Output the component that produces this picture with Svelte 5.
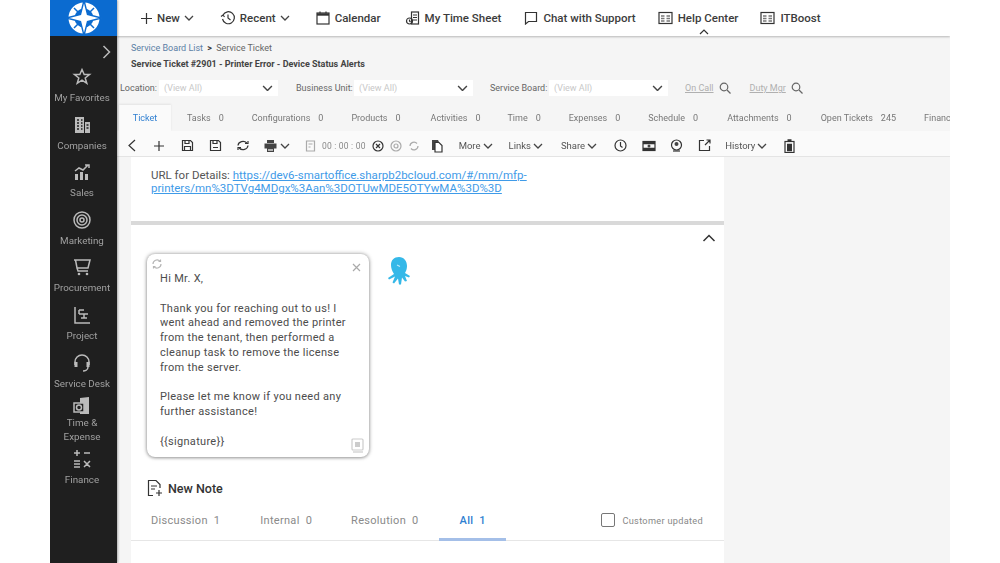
<script lang="ts">
    const sideItems = [
        { id: "fav", label: ["My Favorites"] },
        { id: "companies", label: ["Companies"] },
        { id: "sales", label: ["Sales"] },
        { id: "marketing", label: ["Marketing"] },
        { id: "procurement", label: ["Procurement"] },
        { id: "project", label: ["Project"] },
        { id: "desk", label: ["Service Desk"] },
        { id: "time", label: ["Time &", "Expense"] },
        { id: "finance", label: ["Finance"] },
    ];

    const tabs = [
        ["Tasks", "0", 16],
        ["Configurations", "0", 28],
        ["Products", "0", 28],
        ["Activities", "0", 30],
        ["Time", "0", 27],
        ["Expenses", "0", 28],
        ["Schedule", "0", 28],
        ["Attachments", "0", 29],
        ["Open Tickets", "245", 29],
    ];

    const noteTabs = [
        ["Discussion", "1", 20],
        ["Internal", "0", 40],
        ["Resolution", "0", 39],
    ];
</script>

{#snippet chev(w = 10)}
    <svg class="chev" width={w} height={w * 0.6} viewBox="0 0 10 6"><path d="M1 1l4 4 4-4" /></svg>
{/snippet}

{#snippet sideIcon(id: string)}
    <svg width="20" height="20" viewBox="0 0 20 20" class="side-icon">
        {#if id === "fav"}
            <path d="M10 2.500l2.200 5h5.300l-4.300 3.400 1.600 5.400-4.800-3.100-4.800 3.100 1.600-5.400-4.300-3.400h5.300z" />
        {:else if id === "companies"}
            <path class="fill" d="M3 2h9v16H3zM13 7h5v11h-5z" />
            <path class="cut" d="M5 5h2M9 5h1.500M5 8h2M9 8h1.500M5 11h2M9 11h1.500M5 14h2M9 14h1.500M14.500 10h2M14.500 13h2" />
        {:else if id === "sales"}
            <path class="fill" d="M3 12h3v6H3zM8 10h3v8H8zM13 12h3v6h-3z" />
            <path d="M3 9l4-3 4 2 5-5M13 3h4v3" />
        {:else if id === "marketing"}
            <circle cx="10" cy="10" r="8" /><circle cx="10" cy="10" r="5" /><circle cx="10" cy="10" r="2" />
        {:else if id === "procurement"}
            <path d="M2 3h16l-2 8H5L3.500 3M5 11l1 3h10" />
            <circle class="fill" cx="7" cy="17" r="1.300" /><circle class="fill" cx="15" cy="17" r="1.300" />
        {:else if id === "project"}
            <path d="M3 2v16h15M7 5h5M7 9h9M9 13h6M7 5v4M12 9v4" />
        {:else if id === "desk"}
            <path d="M3 12V9a7 7 0 0 1 14 0v3" />
            <path class="fill" d="M2.500 9h3v5h-3zM14.500 9h3v5h-3z" />
            <path d="M16 14c0 3-3 4-5 4" />
        {:else if id === "time"}
            <path class="fill" d="M8 2l9-1v17H8z" />
            <rect class="dark" x="2" y="7" width="10" height="9" />
            <circle cx="7" cy="11.500" r="2.500" />
        {:else}
            <path d="M5 1v6M2 4h6M12 4h6M2 12h6M2 15h6M2 18h6M12 12l6 6M18 12l-6 6" />
        {/if}
    </svg>
{/snippet}

<div class="frame">
    <aside class="sidebar">
        <div class="logo">
            <svg width="36" height="36" viewBox="0 0 36 36">
                <circle cx="18" cy="18" r="12.500" fill="none" stroke="#fff" stroke-width="6" />
                <path d="M8 8l20 20M28 8L8 28" stroke="#0b6bd0" stroke-width="1.500" />
                <path d="M18 .5l3.500 14 14 3.500-14 3.500-3.500 14-3.500-14-14-3.500 14-3.500z" fill="#fff" stroke="#0b6bd0" stroke-width="1.400" />
            </svg>
        </div>
        <div class="side-toggle">
            <svg width="9" height="14" viewBox="0 0 9 14"><path d="M1.500 1l6 6-6 6" /></svg>
        </div>
        {#each sideItems as item}
            <div class="side-item {item.id}">
                {@render sideIcon(item.id)}
                {#each item.label as line}
                    <span>{line}</span>
                {/each}
            </div>
        {/each}
    </aside>

    <div class="main">
        <header class="topbar">
            <div class="nav-item new">
                <svg width="13" height="13" viewBox="0 0 13 13"><path d="M6.500 1v11M1 6.500h11" /></svg>
                New {@render chev()}
            </div>
            <div class="nav-item recent">
                <svg width="16" height="16" viewBox="0 0 16 16"><path d="M3 5a6 6 0 1 1-.5 4M1 6.500l2-1.500 1.500 2M8 4.500V8l2.500 2" /></svg>
                Recent {@render chev()}
            </div>
            <div class="nav-item calendar">
                <svg width="14" height="14" viewBox="0 0 14 14"><rect x="1" y="2" width="12" height="11" /><path class="thick" d="M1 3.500h12" /><path d="M4 .5v2M10 .5v2" /></svg>
                Calendar
            </div>
            <div class="nav-item sheet">
                <svg width="15" height="15" viewBox="0 0 15 15"><rect x="6.500" y="1" width="7" height="12" /><path d="M8 4h4M8 6.500h4M8 9h4" /><circle cx="4.500" cy="10" r="3" /><path d="M4.500 8.500V10l1 1" /></svg>
                My Time Sheet
            </div>
            <div class="nav-item chat">
                <svg width="14" height="14" viewBox="0 0 14 14"><path d="M1.500 1.500h11v9h-8l-3 2.500z" /></svg>
                Chat with Support
            </div>
            <div class="nav-item help">
                <svg width="15" height="14" viewBox="0 0 15 14"><rect x="1" y="1.500" width="13" height="11" /><path class="thick-soft" d="M3 5h3.500M3 7.500h3.500M3 10h3.500M8.500 5H12M8.500 7.500H12M8.500 10H12" /></svg>
                Help Center
            </div>
            <div class="nav-item boost">
                <svg width="15" height="14" viewBox="0 0 15 14"><rect x="1" y="1.500" width="13" height="11" /><path class="thick-soft" d="M3 5h3.500M3 7.500h3.500M3 10h3.500M8.500 5H12M8.500 7.500H12M8.500 10H12" /></svg>
                ITBoost
            </div>
            <svg class="collapse" width="10" height="6" viewBox="0 0 10 6"><path d="M1 5l4-4 4 4" /></svg>
        </header>

        <div class="page-head">
            <div class="crumbs"><span class="crumb-link">Service Board List</span> <b>&gt;</b> Service Ticket</div>
            <div class="ticket-title">Service Ticket #2901 - Printer Error - Device Status Alerts</div>
        </div>

        <div class="filters">
            <span class="f-label first">Location:</span>
            <div class="select"><span>(View All)</span>{@render chev(11)}</div>
            <span class="f-label unit">Business Unit:</span>
            <div class="select"><span>(View All)</span>{@render chev(11)}</div>
            <span class="f-label board">Service Board:</span>
            <div class="select"><span>(View All)</span>{@render chev(11)}</div>
            <span class="f-link oncall">On Call</span>
            <svg class="search" width="12" height="12" viewBox="0 0 12 12"><circle cx="5" cy="5" r="3.800" /><path d="M8 8l3.500 3.500" /></svg>
            <span class="f-link duty">Duty Mgr</span>
            <svg class="search" width="12" height="12" viewBox="0 0 12 12"><circle cx="5" cy="5" r="3.800" /><path d="M8 8l3.500 3.500" /></svg>
        </div>

        <nav class="tabs">
            <div class="tab active">Ticket</div>
            {#each tabs as [name, count, gap]}
                <div class="tab" style="margin-left: {gap}px">{name}<i>{count}</i></div>
            {/each}
            <div class="tab finance">Finance</div>
        </nav>

        <div class="toolbar">
            <svg class="t" style="margin-left:10px" width="10" height="13" viewBox="0 0 10 13"><path d="M8 1L2 6.500 8 12" /></svg>
            <svg class="t" style="margin-left:16px" width="12" height="12" viewBox="0 0 12 12"><path d="M6 1v10M1 6h10" /></svg>
            <svg class="t" style="margin-left:16px" width="13" height="13" viewBox="0 0 13 13"><path d="M1.500 1.500h8l2 2v8h-10z" /><path d="M4 1.500v3h4v-3M3.500 11.500v-4h6v4" /></svg>
            <svg class="t" style="margin-left:15px" width="13" height="13" viewBox="0 0 13 13"><path d="M1.500 1.500h8l2 2v8h-10z" /><path d="M4 1.500v3h4v-3M4 8.500h5" /></svg>
            <svg class="t" style="margin-left:14px" width="14" height="13" viewBox="0 0 14 13"><path d="M2 6.500a5 4.500 0 0 1 8.800-2.500M12 6.500a5 4.500 0 0 1-8.800 2.500M9 4.500h3V2M5 8.500H2V11" /></svg>
            <svg class="t" style="margin-left:13px" width="15" height="14" viewBox="0 0 15 14"><path class="fill" d="M4 1h7v3H4zM1.500 4.500h12v5h-12zM4 9h7v4H4z" /><path class="cut" d="M5 11h5" /></svg>
            <span class="t-chev">{@render chev()}</span>
            <svg class="t faint" style="margin-left:15px" width="11" height="12" viewBox="0 0 11 12"><path d="M1.500 1h8v10h-8zM3.500 4h4M3.500 7h2" /></svg>
            <span class="timer">00 : 00 : 00</span>
            <svg class="t" style="margin-left:6px" width="12" height="12" viewBox="0 0 12 12"><circle cx="6" cy="6" r="5" /><path d="M4 4l4 4M8 4l-4 4" /></svg>
            <svg class="t faint" style="margin-left:6px" width="12" height="12" viewBox="0 0 12 12"><circle cx="6" cy="6" r="5" /><circle cx="6" cy="6" r="2" /></svg>
            <svg class="t faint" style="margin-left:6px" width="12" height="12" viewBox="0 0 12 12"><path d="M2 6a4 4 0 0 1 7-2.500M10 6a4 4 0 0 1-7 2.500" /></svg>
            <svg class="t" style="margin-left:11px" width="12" height="14" viewBox="0 0 12 14"><path class="fill" d="M1 1h6l1 2v8H1z" /><path d="M4 3.500h4l3 3v6.500H4z" fill="#fff" /></svg>
            <span class="t-label" style="margin-left:16px">More</span>{@render chev()}
            <span class="t-label" style="margin-left:16px">Links</span>{@render chev()}
            <span class="t-label" style="margin-left:18px">Share</span>{@render chev()}
            <svg class="t" style="margin-left:17px" width="13" height="13" viewBox="0 0 13 13"><circle cx="6.500" cy="6.500" r="5.500" /><path d="M6.500 3v4l2 1.500" /></svg>
            <svg class="t" style="margin-left:15px" width="14" height="12" viewBox="0 0 14 12"><rect x="1" y="1.500" width="12" height="9" /><path class="thick" d="M1 3h12M1 9h12" /><circle class="fill" cx="7" cy="6" r="1.500" /></svg>
            <svg class="t" style="margin-left:14px" width="13" height="13" viewBox="0 0 13 13"><circle cx="6.500" cy="6" r="5" /><circle class="fill" cx="6.500" cy="5" r="2" /><path d="M3 12h7" /></svg>
            <svg class="t" style="margin-left:15px" width="13" height="13" viewBox="0 0 13 13"><path d="M6 1.500H1.500v10h10V7M7 6l5-5M8.500 1H12v3.500" /></svg>
            <span class="t-label hist">History</span>{@render chev()}
            <svg class="t" style="margin-left:17px" width="11" height="14" viewBox="0 0 11 14"><rect x="1" y="2.500" width="9" height="11" /><path class="thick" d="M3.500 1.500h4M3 6h5M3 8.500h5M3 11h5" /></svg>
        </div>

        <div class="body">
            <div class="column">
                <section class="card details">
                    URL for Details: <a href="#details">https://dev6-smartoffice.sharpb2bcloud.com/#/mm/mfp-<br />printers/mn%3DTVg4MDgx%3Aan%3DOTUwMDE5OTYwMA%3D%3D</a>
                </section>
                <section class="card notes">
                    <svg class="card-collapse" width="14" height="8" viewBox="0 0 14 8"><path d="M1.500 7L7 1.500 12.500 7" /></svg>
                    <div class="reply-row">
                        <div class="reply">
                            <svg class="reply-spin" width="10" height="10" viewBox="0 0 10 10"><path d="M1 5a4 4 0 0 1 7-2.700M9 5a4 4 0 0 1-7 2.700M6.500 2.500H8.500V.5M3.500 7.500H1.500v2" /></svg>
                            <svg class="reply-close" width="9" height="9" viewBox="0 0 9 9"><path d="M1 1l7 7M8 1L1 8" /></svg>
                            <p>Hi Mr. X,</p>
                            <p>Thank you for reaching out to us! I went ahead and removed the printer from the tenant, then performed a cleanup task to remove the license from the server.</p>
                            <p>Please let me know if you need any further assistance!</p>
                            <p class="sig">{"{{signature}}"}</p>
                            <svg class="reply-copy" width="13" height="15" viewBox="0 0 13 15"><rect x="1" y="1" width="11" height="11" rx="1" /><rect class="fill" x="4" y="4" width="5" height="5" /><path d="M2 14h10" /></svg>
                        </div>
                        <svg class="octopus" width="26" height="30" viewBox="0 0 26 30">
                            <path d="M14 1c5 0 8 4 8 9 0 3-1 5-2 7l5 3-1 1.500-4-1.500 2 5-2 .5-3-4-1 7h-2l-1-6-4 5-1.500-1 2.500-6-6 3-1-1.500 6-4C7 15 6 12 6 9c0-5 3-8 8-8z" fill="#35b8e8" />
                            <path d="M12 9l3 1.500" stroke="#bfeafa" fill="none" />
                        </svg>
                    </div>
                    <div class="new-note">
                        <svg width="16" height="18" viewBox="0 0 16 18"><path d="M6 16.500H1.500v-15H9l4 4V9M4 7h6M4 10h4M12 11v6M9 14h6" /></svg>
                        New Note
                    </div>
                    <div class="note-tabs">
                        {#each noteTabs as [name, count, gap]}
                            <div class="note-tab" style="margin-left: {gap}px">{name}<i>{count}</i></div>
                        {/each}
                        <div class="note-tab selected">All<i>1</i></div>
                        <label class="customer"><span class="box"></span>Customer updated</label>
                    </div>
                </section>
            </div>
        </div>
    </div>
</div>

<style>
    :global(body) {
        margin: 0;
        background: #fff;
    }
    .frame {
        display: flex;
        width: 900px;
        height: 563px;
        margin-left: 50px;
        overflow: hidden;
        font-family: Roboto, "Liberation Sans", sans-serif;
        color: #444;
        filter: blur(0.6px);
    }
    svg {
        fill: none;
        stroke: #333;
        stroke-width: 1.2;
        flex-shrink: 0;
    }
    svg .fill {
        fill: currentColor;
        stroke: none;
    }
    svg .thick {
        stroke-width: 2.4;
    }
    svg .thick-soft {
        stroke-width: 1.600;
        stroke: #777;
    }

    /* sidebar */
    .sidebar {
        width: 67px;
        flex-shrink: 0;
        box-sizing: border-box;
        background: #1f1f1f;
        color: #a0a0a0;
        display: flex;
        flex-direction: column;
        align-items: center;
        box-shadow: 1px 0 2px rgba(0, 0, 0, 0.3);
        z-index: 2;
    }
    .logo {
        width: 100%;
        height: 36px;
        background: #0b6bd0;
        display: flex;
        align-items: center;
        justify-content: center;
    }
    .side-toggle {
        align-self: flex-end;
        height: 31px;
        padding-right: 6px;
        display: flex;
        align-items: center;
    }
    .side-toggle svg {
        stroke: #bbb;
        stroke-width: 1.500;
    }
    .side-item {
        height: 47.600px;
        padding-right: 3px;
        display: flex;
        flex-direction: column;
        align-items: center;
        font-size: 9.800px;
        line-height: 13.500px;
        white-space: nowrap;
    }
    .side-item svg {
        margin-bottom: 4px;
        color: #bbb;
        stroke: #bbb;
        stroke-width: 1.500;
    }
    .side-item.time {
        height: 53px;
        margin-top: -4px;
    }
    .side-item.time svg {
        margin-bottom: 0;
    }
    .side-icon .cut {
        stroke: #1f1f1f;
    }
    .side-icon .dark {
        fill: #1f1f1f;
    }

    /* top bar */
    .main {
        flex: 1;
        min-width: 0;
        background: #f5f5f5;
        display: flex;
        flex-direction: column;
    }
    .topbar {
        position: relative;
        height: 36px;
        flex-shrink: 0;
        box-sizing: border-box;
        background: #fff;
        box-shadow: 0 1px 2px rgba(0, 0, 0, 0.25);
        display: flex;
        align-items: center;
        padding-left: 23px;
        font-size: 11.500px;
        font-weight: 500;
        color: #3c3c3c;
        white-space: nowrap;
        z-index: 1;
    }
    .nav-item {
        display: flex;
        align-items: center;
        gap: 5px;
    }
    .nav-item.new,
    .nav-item.recent {
        gap: 4px;
    }
    .nav-item.recent { margin-left: 26px; }
    .nav-item.calendar { margin-left: 26px; }
    .nav-item.sheet { margin-left: 24px; }
    .nav-item.chat { margin-left: 23px; }
    .nav-item.help { margin-left: 22px; }
    .nav-item.boost { margin-left: 22px; }
    .chev {
        stroke: #444;
        stroke-width: 1.300;
    }
    .collapse {
        position: absolute;
        left: 582px;
        top: 29px;
        stroke: #333;
    }

    /* ticket heading */
    .page-head {
        height: 44px;
        box-sizing: border-box;
        padding: 4px 0 0 14px;
        flex-shrink: 0;
        font-size: 9px;
        line-height: 16px;
        color: #666;
        white-space: nowrap;
    }
    .crumb-link {
        color: #5b7fa5;
    }
    .crumbs b {
        color: #333;
        margin: 0 2px;
    }
    .ticket-title {
        font-weight: 700;
        color: #444;
    }

    /* filters */
    .filters {
        height: 16px;
        flex-shrink: 0;
        display: flex;
        align-items: center;
        font-size: 9px;
        color: #666;
        white-space: nowrap;
    }
    .f-label.first { margin-left: 3px; width: 37px; }
    .f-label.unit { margin-left: 18px; width: 56px; }
    .f-label.board { margin-left: 17px; width: 57px; }
    .select {
        width: 119px;
        height: 16px;
        margin-left: 2px;
        padding: 0 5px;
        box-sizing: border-box;
        background: #fff;
        color: #c8c8c8;
        display: flex;
        align-items: center;
        justify-content: space-between;
    }
    .f-link {
        color: #b0b0b0;
        text-decoration: underline;
    }
    .f-link.oncall { margin-left: 17px; }
    .f-link.duty { margin-left: 19px; }
    .search {
        margin-left: 5px;
        stroke: #666;
    }

    /* tabs */
    .tabs {
        height: 27px;
        flex-shrink: 0;
        display: flex;
        align-items: flex-end;
        margin-top: 8px;
        font-size: 9px;
        color: #777;
        white-space: nowrap;
    }
    .tab {
        height: 26px;
        line-height: 26px;
        display: flex;
        flex-shrink: 0;
    }
    .tab i {
        font-style: normal;
        margin-left: 8px;
    }
    .tab.active {
        width: 52px;
        margin-left: 2px;
        background: #fafafa;
        color: #2f7fd1;
        justify-content: center;
        box-shadow: 0 -1px 2px rgba(0, 0, 0, 0.08);
    }
    .tab.finance { margin-left: 28px; }

    /* toolbar */
    .toolbar {
        height: 26px;
        padding-top: 4px;
        flex-shrink: 0;
        display: flex;
        align-items: center;
        background: #fafafa;
        border-bottom: 1px solid #e4e4e4;
        box-sizing: border-box;
        font-size: 9.500px;
        color: #555;
        white-space: nowrap;
    }
    .t {
        color: #444;
        stroke: #333;
    }
    .t .cut { stroke: #fff; }
    .t.faint { stroke: #aaa; }
    .t-chev {
        margin-left: 2px;
        display: flex;
    }
    .t-label {
        margin-right: 2px;
    }
    .t-label.hist {
        margin-left: 14px;
    }
    .timer {
        margin-left: 6px;
        font-size: 8.500px;
        color: #888;
        letter-spacing: 0.2px;
    }

    /* content */
    .body {
        flex: 1;
        min-height: 0;
        overflow: hidden;
        padding-left: 14px;
    }
    .column {
        width: 593px;
        display: flex;
        flex-direction: column;
        gap: 4px;
        background: #d9d9d9;
    }
    .card {
        background: #fff;
    }
    .details {
        height: 64px;
        box-sizing: border-box;
        padding: 12px 0 0 20px;
        font-size: 11.500px;
        line-height: 12.500px;
        color: #555;
        white-space: nowrap;
    }
    .details a {
        color: #3f9be8;
    }
    .notes {
        position: relative;
        height: 340px;
        box-sizing: border-box;
        padding: 29px 0 0 16px;
    }
    .card-collapse {
        position: absolute;
        right: 8px;
        top: 9px;
        stroke-width: 1.500;
    }
    .reply-row {
        display: flex;
        align-items: flex-start;
        gap: 16px;
    }
    .reply {
        position: relative;
        width: 222px;
        height: 203px;
        box-sizing: border-box;
        padding: 18px 10px 0 13px;
        border-radius: 8px;
        box-shadow: 0 0 4px rgba(0, 0, 0, 0.4), 0 1px 3px rgba(0, 0, 0, 0.2);
        font-size: 11px;
        line-height: 14.800px;
        color: #4c4c4c;
        letter-spacing: 0.3px;
    }
    .reply p {
        margin: 0 0 14.800px;
    }
    .reply p.sig {
        margin-top: 15px;
    }
    .reply-spin {
        position: absolute;
        left: 5px;
        top: 5px;
        stroke: #b5b5b5;
    }
    .reply-close {
        position: absolute;
        right: 8px;
        top: 9px;
        stroke: #aaa;
    }
    .reply-copy {
        position: absolute;
        right: 5px;
        bottom: 4px;
        color: #ccc;
        stroke: #ccc;
    }
    .octopus {
        margin-top: 2px;
        stroke: none;
    }
    .new-note {
        display: flex;
        align-items: center;
        gap: 5px;
        margin-top: 22px;
        height: 18px;
        font-size: 12.500px;
        font-weight: 500;
        color: #333;
    }
    .note-tabs {
        position: relative;
        height: 40px;
        margin: 3px 0 0 -16px;
        display: flex;
        align-items: center;
        border-bottom: 1px solid #e6e6e6;
        font-size: 11px;
        color: #8a8a8a;
        letter-spacing: 0.3px;
    }
    .note-tab {
        display: flex;
        white-space: nowrap;
    }
    .note-tab i {
        font-style: normal;
        margin-left: 6px;
    }
    .note-tab.selected {
        position: relative;
        margin-left: 41px;
        color: #2f7fd1;
        font-weight: 500;
    }
    .note-tab.selected::after {
        content: "";
        position: absolute;
        left: -21px;
        bottom: -14px;
        width: 67px;
        height: 3px;
        background: #a4bfe8;
    }
    .customer {
        display: flex;
        align-items: center;
        gap: 7px;
        margin-left: auto;
        margin-right: 21px;
        font-size: 9.200px;
        color: #888;
    }
    .box {
        width: 12px;
        height: 12px;
        border: 1.500px solid #777;
        border-radius: 2px;
    }
</style>
